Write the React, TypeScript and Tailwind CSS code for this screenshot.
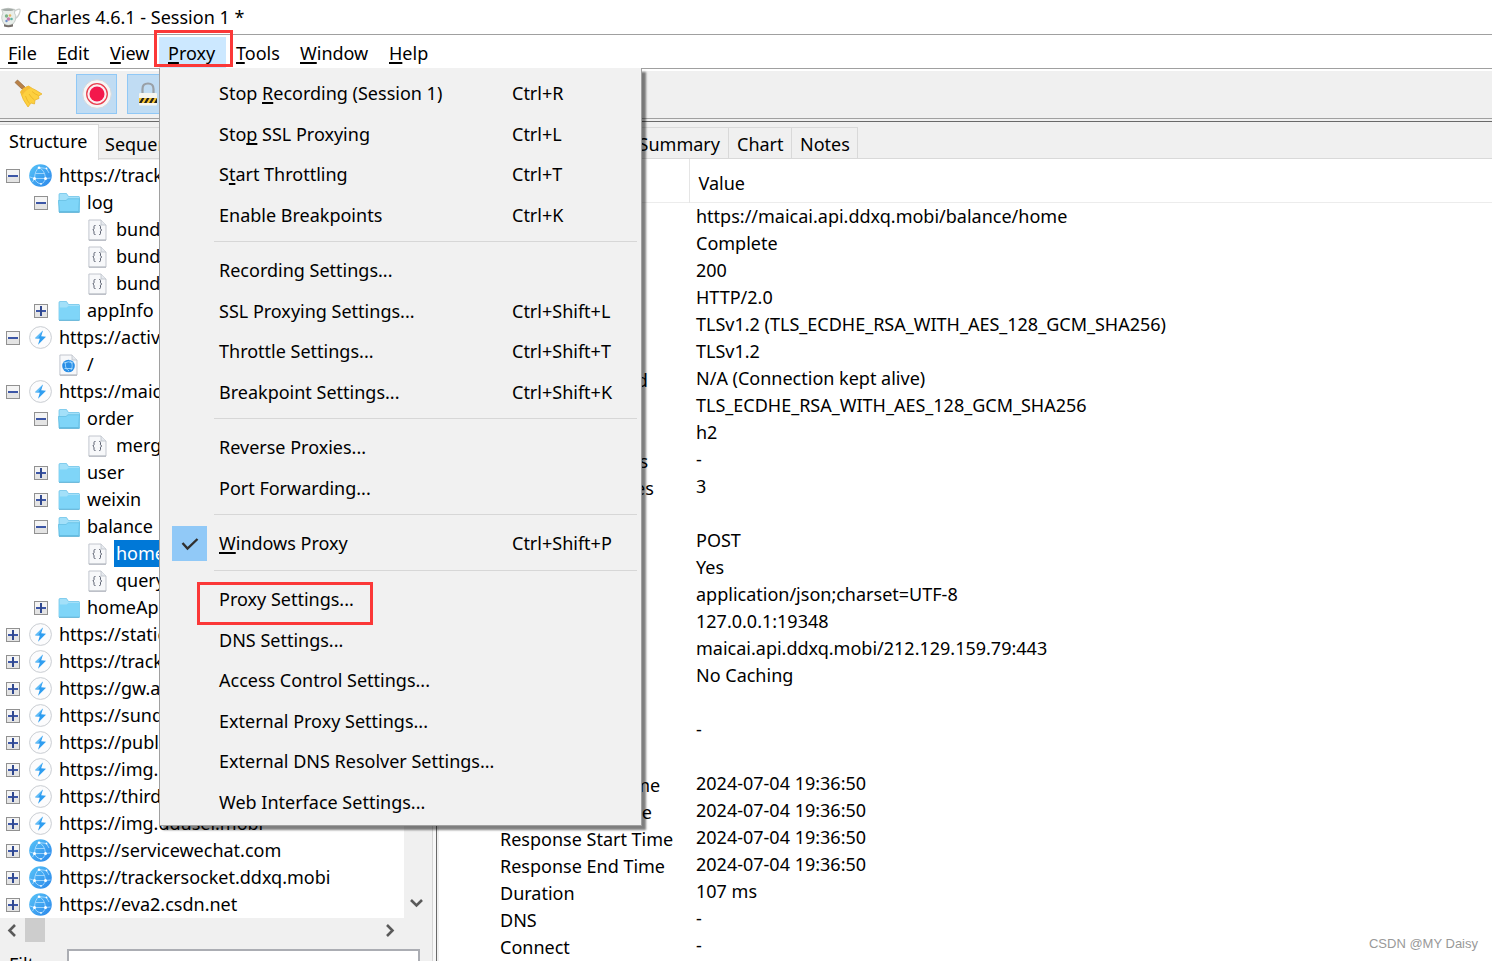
import { useState } from "react";
import { clsx } from "clsx";

type IconKind = "globe" | "bolt" | "open" | "folder" | "json" | "web";

type Node = {
  name: string;
  icon: IconKind;
  level: number;
  expanded?: boolean;
  selected?: boolean;
};

const TREE: Node[] = [
  { name: "https://tracker.ddxq.mobi", icon: "globe", level: 0, expanded: true },
  { name: "log", icon: "open", level: 1, expanded: true },
  { name: "bundle", icon: "json", level: 2 },
  { name: "bundle", icon: "json", level: 2 },
  { name: "bundle", icon: "json", level: 2 },
  { name: "appInfo", icon: "folder", level: 1, expanded: false },
  { name: "https://activity.ddxq.mobi", icon: "bolt", level: 0, expanded: true },
  { name: "/", icon: "web", level: 1 },
  { name: "https://maicai.api.ddxq.mobi", icon: "bolt", level: 0, expanded: true },
  { name: "order", icon: "open", level: 1, expanded: true },
  { name: "mergeInfo", icon: "json", level: 2 },
  { name: "user", icon: "folder", level: 1, expanded: false },
  { name: "weixin", icon: "folder", level: 1, expanded: false },
  { name: "balance", icon: "open", level: 1, expanded: true },
  { name: "home", icon: "json", level: 2, selected: true },
  { name: "query", icon: "json", level: 2 },
  { name: "homeApi", icon: "folder", level: 1, expanded: false },
  { name: "https://static.ddxq.mobi", icon: "bolt", level: 0, expanded: false },
  { name: "https://track.ddxq.mobi", icon: "bolt", level: 0, expanded: false },
  { name: "https://gw.api.ddxq.mobi", icon: "bolt", level: 0, expanded: false },
  { name: "https://sunquan.ddxq.mobi", icon: "bolt", level: 0, expanded: false },
  { name: "https://public.ddxq.mobi", icon: "bolt", level: 0, expanded: false },
  { name: "https://img.ddxq.mobi", icon: "bolt", level: 0, expanded: false },
  { name: "https://thirdwx.qlogo.cn", icon: "bolt", level: 0, expanded: false },
  { name: "https://img.dduser.mobi", icon: "bolt", level: 0, expanded: false },
  { name: "https://servicewechat.com", icon: "globe", level: 0, expanded: false },
  { name: "https://trackersocket.ddxq.mobi", icon: "globe", level: 0, expanded: false },
  { name: "https://eva2.csdn.net", icon: "globe", level: 0, expanded: false },
];

const DETAILS: [string, string][] = [
  ["URL", "https://maicai.api.ddxq.mobi/balance/home"],
  ["Status", "Complete"],
  ["Response Code", "200"],
  ["Protocol", "HTTP/2.0"],
  ["TLS", "TLSv1.2 (TLS_ECDHE_RSA_WITH_AES_128_GCM_SHA256)"],
  ["Protocol", "TLSv1.2"],
  ["Session Resumed", "N/A (Connection kept alive)"],
  ["Cipher Suite", "TLS_ECDHE_RSA_WITH_AES_128_GCM_SHA256"],
  ["ALPN", "h2"],
  ["Client Certificates", "-"],
  ["Server Certificates", "3"],
  ["Extensions", ""],
  ["Method", "POST"],
  ["Kept Alive", "Yes"],
  ["Content-Type", "application/json;charset=UTF-8"],
  ["Client Addr", "127.0.0.1:19348"],
  ["Remote Addr", "maicai.api.ddxq.mobi/212.129.159.79:443"],
  ["Tags", "No Caching"],
  ["Connection", ""],
  ["WebSockets", "-"],
  ["Timing", ""],
  ["Request Start Time", "2024-07-04 19:36:50"],
  ["Request End Time", "2024-07-04 19:36:50"],
  ["Response Start Time", "2024-07-04 19:36:50"],
  ["Response End Time", "2024-07-04 19:36:50"],
  ["Duration", "107 ms"],
  ["DNS", "-"],
  ["Connect", "-"],
];

type Item = { label: string; mnemonic?: number; keys?: string; checked?: boolean; boxed?: boolean };

const PROXY_MENU: Item[][] = [
  [
    { label: "Stop Recording (Session 1)", mnemonic: 5, keys: "Ctrl+R" },
    { label: "Stop SSL Proxying", mnemonic: 3, keys: "Ctrl+L" },
    { label: "Start Throttling", mnemonic: 1, keys: "Ctrl+T" },
    { label: "Enable Breakpoints", keys: "Ctrl+K" },
  ],
  [
    { label: "Recording Settings..." },
    { label: "SSL Proxying Settings...", keys: "Ctrl+Shift+L" },
    { label: "Throttle Settings...", keys: "Ctrl+Shift+T" },
    { label: "Breakpoint Settings...", keys: "Ctrl+Shift+K" },
  ],
  [{ label: "Reverse Proxies..." }, { label: "Port Forwarding..." }],
  [{ label: "Windows Proxy", mnemonic: 0, keys: "Ctrl+Shift+P", checked: true }],
  [
    { label: "Proxy Settings...", boxed: true },
    { label: "DNS Settings..." },
    { label: "Access Control Settings..." },
    { label: "External Proxy Settings..." },
    { label: "External DNS Resolver Settings..." },
    { label: "Web Interface Settings..." },
  ],
];

function Mnemonic({ text, at }: { text: string; at?: number }) {
  if (at === undefined) return <>{text}</>;
  return (
    <>
      {text.slice(0, at)}
      <span className="underline decoration-2 underline-offset-2 [text-decoration-skip-ink:none]">{text[at]}</span>
      {text.slice(at + 1)}
    </>
  );
}

function NodeIcon({ kind }: { kind: IconKind }) {
  if (kind === "globe")
    return (
      <svg width="23" height="23" viewBox="0 0 23 23">
        <defs>
          <linearGradient id="globe" x1="0" y1="0" x2="1" y2="1">
            <stop offset="0" stopColor="#58c4f8" />
            <stop offset="1" stopColor="#2a86ea" />
          </linearGradient>
        </defs>
        <circle cx="11.5" cy="11.5" r="11.3" fill="url(#globe)" />
        <g fill="none" stroke="#b5e0ff" strokeWidth="0.8">
          <path d="M10 3.500C7 6 5.800 9 5.500 14.500M10 3.500C14 5.500 16 9 16.500 14.500M5.500 14.500H16.500M6.500 9.500H15.500M5.500 14.500C6.500 17.500 9 19.500 12 20M16.500 14.500C16 17 14.500 19 12 20M10 3.500L17.500 4.500L20 9M1 13L5.500 14.500L3.500 18M16.500 14.500L21.500 14" />
        </g>
        <g fill="#fff">
          <circle cx="10" cy="3.800" r="1.300" />
          <circle cx="5.500" cy="14.500" r="1.500" />
          <circle cx="16.500" cy="14.500" r="1.500" />
          <circle cx="17.500" cy="4.500" r="0.900" />
          <circle cx="12" cy="19.800" r="0.900" />
        </g>
      </svg>
    );
  if (kind === "bolt")
    return (
      <svg width="23" height="23" viewBox="0 0 23 23">
        <circle cx="11.5" cy="11.5" r="10.9" fill="#fcfcfd" stroke="#c3c7cd" strokeWidth="0.9" />
        <path d="M14 4.500L6 12.300L10.800 12.800L9 18.700L17 10.800L12.200 10.200Z" fill="#2e9df0" />
        <path d="M14 4.500L6 12.300L9 12.600Z" fill="#62bdf7" />
      </svg>
    );
  if (kind === "open" || kind === "folder")
    return (
      <svg width="22" height="20" viewBox="0 0 22 20">
        <path d="M1 1.500Q1 .5 2 .5H8.500L10.500 3.500H21Q21.500 3.500 21.500 4.500V19H1Z" fill="#a3e0f9" stroke="#62bfe6" strokeWidth="0.7" />
        {kind === "folder" ? (
          <path d="M1 6.500H8.500L10.500 5H21.500V19H1Z" fill="#7fd5f8" />
        ) : (
          <path d="M.3 7.500H8L10 5.700H21.500L20.500 18.500H1.500Z" fill="#7fd5f8" stroke="#58b7de" strokeWidth="0.6" />
        )}
        <path d="M1 19.300H21.500" stroke="#4fa9d0" strokeWidth="0.9" />
      </svg>
    );
  return (
    <svg width="19" height="22" viewBox="0 0 19 22">
      <path d="M.9 1H13L18 6V21H.9Z" fill="#f7f8fa" stroke="#bcc1c9" strokeWidth="0.9" />
      <path d="M13 1V6H18" fill="#e6e9ee" stroke="#bcc1c9" strokeWidth="0.8" />
      <path d="M.9 21.200H18" stroke="#a6abb4" strokeWidth="0.9" />
      {kind === "json" ? (
        <g fill="none" stroke="#5b6170" strokeWidth="1">
          <path d="M7.500 6.500H6.800Q6 6.500 6 7.500V9.800L4.800 11L6 12.200V14.500Q6 15.500 6.800 15.500H7.500" />
          <path d="M11 6.500H11.700Q12.500 6.500 12.500 7.500V9.800L13.700 11L12.500 12.200V14.500Q12.500 15.500 11.700 15.500H11" />
        </g>
      ) : (
        <g>
          <circle cx="9.5" cy="12" r="6.300" fill="#2b8fe6" />
          <path d="M5 9Q9.500 6.500 14 9M5.500 14.500H13.500M7 8C5.500 12 7 15 10 17M11 6.500C14 10 13.500 13 12 16" fill="none" stroke="#a9dcff" strokeWidth="0.9" />
        </g>
      )}
    </svg>
  );
}

function Expander({ open, label }: { open: boolean; label: string }) {
  return (
    <button aria-label={label} aria-expanded={open} className="block size-[14px]">
      <svg width="14" height="14" viewBox="0 0 14 14">
        <rect x="0.5" y="0.5" width="13" height="13" fill="#f4f4f4" stroke="#919191" />
        <rect x="1" y="8" width="12" height="5" fill="#e4e4e4" />
        <rect x="2" y="6" width="10" height="2" fill="#3c56a6" />
        {!open && <rect x="6" y="2" width="2" height="10" fill="#31498f" />}
      </svg>
    </button>
  );
}

function Chevron({ d, label }: { d: string; label: string }) {
  return (
    <button aria-label={label} className="flex size-6 items-center justify-center">
      <svg width="13" height="13" viewBox="0 0 13 13" fill="none" stroke="#5a5a5a" strokeWidth="2.600">
        <path d={d} />
      </svg>
    </button>
  );
}

function TitleBar() {
  return (
    <header className="flex h-[35px] items-center gap-[6px] border-b border-[#a0a0a0] bg-white">
      <svg width="21" height="21" viewBox="0 0 21 21">
        <path d="M1.500 2.500Q8 0 15 2.500L14.500 6Q18 11 13 17Q8 20 4 17Q0 11 3 6Z" fill="#e8eeea" stroke="#b4bab6" strokeWidth="0.7" />
        <path d="M14.500 4Q21 0 20 4.500Q19 9.500 15 11.500" fill="none" stroke="#c9cdca" strokeWidth="1.300" />
        <ellipse cx="8" cy="2.800" rx="6" ry="1.200" fill="#a3aaa6" />
        <path d="M4 17Q8 19.500 13 17L13 19.500Q8.500 21 4 19.500Z" fill="#77706c" />
        <circle cx="6.500" cy="9" r="1.700" fill="#7db489" />
        <circle cx="10" cy="8.500" r="1.300" fill="#e9b35f" />
        <circle cx="8.500" cy="12" r="1.800" fill="#c77fae" />
        <circle cx="11.500" cy="12" r="1.300" fill="#5fb6a5" />
        <circle cx="6.500" cy="14" r="1.200" fill="#6c8ec9" />
      </svg>
      <h1>Charles 4.6.1 - Session 1 *</h1>
    </header>
  );
}

function ProxyMenu() {
  return (
    <div
      role="menu"
      className="absolute top-full left-0 z-10 w-[483px] border border-t-0 border-[#a0a0a0] bg-[#f1f1f1] py-1 shadow-[4px_4px_2px_rgba(0,0,0,0.5)]"
    >
      {PROXY_MENU.map((group, i) => (
        <div key={i}>
          {i > 0 && (
            <div className="flex h-[15px] items-center pr-1 pl-[54px]">
              <hr className="w-full border-[#d7d7d7]" />
            </div>
          )}
          <div>
            {group.map((item) => (
              <button
                key={item.label}
                role={item.checked ? "menuitemcheckbox" : "menuitem"}
                aria-checked={item.checked}
                className="relative flex w-full items-center pt-[2px] text-left odd:h-[41px] even:h-10"
              >
                <span className="flex w-[59px] shrink-0 pl-3">
                  {item.checked && (
                    <span className="flex size-[35px] items-center justify-center bg-[#91c9f7]">
                      <svg width="18" height="14" viewBox="0 0 18 14" fill="none" stroke="#303030" strokeWidth="2.400">
                        <path d="M1.500 6L6.500 11.500L16.500 2" />
                      </svg>
                    </span>
                  )}
                </span>
                <span className="w-[293px] shrink-0">
                  <Mnemonic text={item.label} at={item.mnemonic} />
                </span>
                <span>{item.keys}</span>
                {item.boxed && <span className="absolute top-1 left-[37px] h-[43px] w-[176px] border-3 border-[#fb3838]" />}
              </button>
            ))}
          </div>
        </div>
      ))}
    </div>
  );
}

function MenuBar() {
  const [open, setOpen] = useState(true);
  return (
    <nav className="flex h-[34px] border-b border-[#a0a0a0] bg-white">
      <button className="w-[49px] pt-[3px] pl-2 text-left">
        <Mnemonic text="File" at={0} />
      </button>
      <button className="w-[53px] pt-[3px] pl-2 text-left">
        <Mnemonic text="Edit" at={0} />
      </button>
      <button className="w-[57px] pt-[3px] pl-2 text-left">
        <Mnemonic text="View" at={0} />
      </button>
      <div className="relative flex w-[69px]">
        <button
          aria-haspopup="menu"
          aria-expanded={open}
          onClick={() => setOpen(!open)}
          className="mt-[2px] w-[67px] bg-[#cce8ff] pt-px pl-[9px] text-left"
        >
          <Mnemonic text="Proxy" at={0} />
        </button>
        <span className="pointer-events-none absolute -top-[5px] -left-[5px] z-20 h-[37px] w-[79px] border-3 border-[#fb3838]" />
        {open && <ProxyMenu />}
      </div>
      <button className="w-16 pt-[3px] pl-2 text-left">
        <Mnemonic text="Tools" at={0} />
      </button>
      <button className="w-[89px] pt-[3px] pl-2 text-left">
        <Mnemonic text="Window" at={0} />
      </button>
      <button className="pt-[3px] pl-2 text-left">
        <Mnemonic text="Help" at={0} />
      </button>
    </nav>
  );
}

function Toolbar() {
  return (
    <div className="flex h-[50px] items-center gap-[10px] border-t-2 border-b border-t-white border-b-[#a0a0a0] pb-[2px] pl-2">
      <button aria-label="Clear" className="mr-[18px] flex size-10 items-center justify-center">
        <svg width="29" height="29" viewBox="0 0 29 29">
          <path d="M1 3.500L3.500 1L11.500 8.500L9 11Z" fill="#b98147" stroke="#8f6336" strokeWidth="0.700" />
          <path d="M6.500 13Q9 8.500 14.500 7Q19 10 21.500 11L28 15L24.500 17L25 19.500L21 21L20.500 25L17 24L14 28Q8.500 21 6.500 13Z" fill="#fdd03f" stroke="#e8b022" strokeWidth="0.700" />
          <path d="M6.500 13Q9 8.500 14.500 7L17 9Q11.500 11 8.500 16Z" fill="#f5bd35" />
          <path d="M11.500 17Q13 21.500 15.500 24.500M15 15Q17.500 19 20.500 21M18 12.500Q21.500 15.500 24.500 16.500" fill="none" stroke="#e9b127" strokeWidth="0.800" />
        </svg>
      </button>
      <button aria-label="Record" className="flex h-10 w-[41px] items-center justify-center border border-[#90c8f6] bg-[#c0dcf3]">
        <svg width="30" height="30" viewBox="0 0 30 30">
          <circle cx="15" cy="15" r="14.300" fill="#f6f6f6" stroke="#d5d9de" />
          <circle cx="15" cy="15" r="10.300" fill="#fbeef0" stroke="#e8404f" strokeWidth="1.300" />
          <circle cx="15" cy="15" r="7.500" fill="#f3184c" />
        </svg>
      </button>
      <button aria-label="SSL Proxying" className="flex h-10 w-[41px] items-center justify-center border border-[#90c8f6] bg-[#c0dcf3]">
        <svg width="20" height="24" viewBox="0 0 20 24">
          <path d="M4.500 12V7Q4.500 1.500 10 1.500Q15.500 1.500 15.500 7V12" fill="none" stroke="#9aa0a6" strokeWidth="2.200" />
          <rect x="1" y="11" width="18" height="12.500" rx="1" fill="#f5f5f0" />
          <rect x="1" y="16" width="18" height="5" fill="#f7c430" />
          <path d="M1 21L4 16H6.500L3.500 21ZM6 21L9 16H11.500L8.500 21ZM11 21L14 16H16.500L13.500 21ZM16 21L19 16V21Z" fill="#222" />
        </svg>
      </button>
    </div>
  );
}

function TreePane() {
  return (
    <aside className="w-[429px] shrink-0">
      <div role="tablist" className="flex h-[38px] items-end pt-[2px]">
        <button role="tab" aria-selected="true" className="h-9 w-[99px] border-t border-r border-[#d9d9d9] bg-white pb-[2px] pl-[9px] text-left">
          Structure
        </button>
        <button role="tab" aria-selected="false" className="mb-px h-8 w-[101px] border border-l-0 border-[#d9d9d9] pt-[2px] pl-[6px] text-left">
          Sequence
        </button>
        <div className="mb-px h-px flex-1 bg-[#d9d9d9]" />
      </div>
      <div className="flex">
        <ul role="tree" className="min-w-0 flex-1 overflow-hidden bg-white pt-[2px]">
          {TREE.map((node, i) => (
            <li
              key={i}
              role="treeitem"
              aria-selected={!!node.selected}
              className={clsx(
                "flex h-[27px] items-center whitespace-nowrap",
                node.level === 0 && "pl-[6px]",
                node.level === 1 && "pl-[34px]",
                node.level === 2 && "pl-[63px]",
              )}
            >
              <span className="mr-[9px] w-[14px] shrink-0">
                {node.expanded !== undefined && <Expander open={node.expanded} label={node.name} />}
              </span>
              <span className="flex w-[23px] shrink-0 justify-center">
                <NodeIcon kind={node.icon} />
              </span>
              <span className={clsx("ml-[5px] px-[2px]", node.selected && "bg-[#0078d7] text-white")}>{node.name}</span>
            </li>
          ))}
        </ul>
        <div className="flex w-[25px] flex-col justify-end bg-[#f0f0f0] pb-1">
          <Chevron label="Scroll down" d="M1 4L6.500 9.500L12 4" />
        </div>
      </div>
      <div className="flex h-6 w-[404px] pr-[3px]">
        <Chevron label="Scroll left" d="M9 1L3.500 6.500L9 12" />
        <div className="ml-px w-5 bg-[#cdcdcd]" />
        <div className="flex-1" />
        <Chevron label="Scroll right" d="M4 1L9.500 6.500L4 12" />
      </div>
      <div className="flex items-center pt-[7px] pr-[9px] pl-[9px]">
        <label htmlFor="filter" className="w-[58px]">
          Filter:
        </label>
        <input id="filter" className="h-[30px] min-w-0 flex-1 border-2 border-[#abadb3] bg-white px-1 outline-none" />
      </div>
    </aside>
  );
}

function DetailPane() {
  return (
    <main className="min-w-0 flex-1 bg-white">
      <div role="tablist" className="flex h-[37px] items-end bg-[#f0f0f0]">
        <button role="tab" aria-selected="true" className="h-[35px] w-[105px] border-t border-r border-[#d9d9d9] bg-white">
          Overview
        </button>
        <button role="tab" aria-selected="false" className="h-8 w-[92px] border border-l-0 border-[#d9d9d9] pt-[2px]">
          Contents
        </button>
        <button role="tab" aria-selected="false" className="h-8 w-[93px] border border-l-0 border-[#d9d9d9] pt-[2px] pr-2 text-right">
          Summary
        </button>
        <button role="tab" aria-selected="false" className="h-8 w-[63px] border border-l-0 border-[#d9d9d9] pt-[2px] pl-2 text-left">
          Chart
        </button>
        <button role="tab" aria-selected="false" className="h-8 w-[66px] border border-l-0 border-[#d9d9d9] pt-[2px] pl-2 text-left">
          Notes
        </button>
        <div className="h-px flex-1 bg-[#d9d9d9]" />
      </div>
      <table className="w-full table-fixed border-collapse text-left">
        <thead>
          <tr className="h-[43px] border-b border-[#ececec]">
            <th className="w-[250px] border-r border-[#e5e5e5] pl-[10px] font-normal">Name</th>
            <th className="pt-[6px] pl-[9px] font-normal">Value</th>
          </tr>
        </thead>
        <tbody>
          {DETAILS.map(([name, value], i) => (
            <tr key={i} className="h-[27px]">
              <td className="pt-1 pl-[61px] leading-[23px]">{name}</td>
              <td className="pl-[7px] leading-[27px]">{value}</td>
            </tr>
          ))}
        </tbody>
      </table>
    </main>
  );
}

export default function App() {
  return (
    <div className="relative flex h-screen flex-col overflow-hidden bg-[#f0f0f0] font-['Noto_Sans','Open_Sans',sans-serif] text-[18px] leading-[27px] text-black">
      <TitleBar />
      <MenuBar />
      <Toolbar />
      <div className="mt-[2px] flex min-h-0 flex-1 border-t border-[#696969]">
        <TreePane />
        <div className="flex w-[10px] shrink-0 cursor-col-resize pl-[3px]">
          <div className="w-[4px] border-l border-[#d5d5d5] bg-[#f7f7f7]" />
          <div className="w-px bg-[#696969]" />
        </div>
        <DetailPane />
      </div>
      <p className="absolute right-[14px] bottom-[6px] font-['Liberation_Sans',sans-serif] text-[13px] leading-[22px] text-[#999]">
        CSDN @MY Daisy
      </p>
    </div>
  );
}
